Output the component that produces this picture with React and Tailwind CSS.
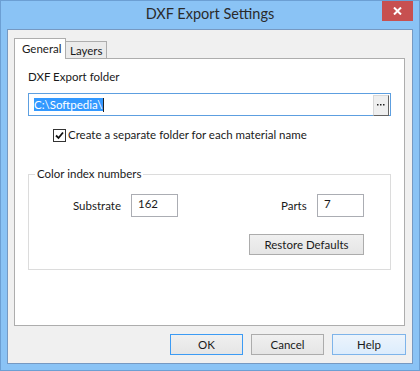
import React from 'react'

const font = { fontFamily: 'Lato, "Segoe UI", sans-serif' }

function WinButton({ children, variant = 'normal', className = '' }) {
  const styles = {
    normal: 'border-[#acacac] bg-gradient-to-b from-[#f0f0f0] to-[#e5e5e5]',
    default: 'border-[#3c9bf4] bg-gradient-to-b from-[#f0f0f0] to-[#e5e5e5]',
    hover: 'border-[#7eb4ea] bg-gradient-to-b from-[#ecf4fc] to-[#dcecfc]',
  }
  return (
    <div
      className={`flex items-center justify-center border text-[11.5px] text-[#1a1a1a] ${styles[variant]} ${className}`}
    >
      {children}
    </div>
  )
}

export default function App() {
  return (
    <div
      className="w-[420px] h-[371px] bg-[#8ac3f5] border border-[#6c9fd3] flex flex-col overflow-hidden"
      style={font}
    >
      {/* Title bar */}
      <div className="relative h-[28px] flex items-center justify-center">
        <span className="text-[14.5px] text-[#2b2b2b] leading-none mt-[-1px]">DXF Export Settings</span>
        <div className="absolute right-[6px] top-0 w-[31px] h-[20px] bg-[#c75050] flex items-center justify-center">
          <svg width="9" height="8" viewBox="0 0 9 8">
            <path d="M1 0.5 L8 7.5 M8 0.5 L1 7.5" stroke="#fff" strokeWidth="2" />
          </svg>
        </div>
      </div>

      {/* Client area */}
      <div className="mx-[6px] border border-[#7699c2] bg-[#f0f0f0] flex-1 flex flex-col">
        <div className="pl-[6px] pr-[7px] pt-[8px]">
          {/* Tabs */}
          <div className="flex items-end h-[20px]">
            <div className="relative z-10 w-[52px] h-[21px] -mb-px bg-white border border-b-0 border-[#adadad] pl-[7px] pt-[3px] text-[11.5px] leading-[14px] text-[#1a1a1a]">
              General
            </div>
            <div className="w-[41px] h-[17px] bg-[#ebebeb] border border-l-0 border-b-0 border-[#adadad] pl-[4px] pt-[2px] text-[11.5px] leading-[14px] text-[#1a1a1a]">
              Layers
            </div>
          </div>

          {/* Tab panel */}
          <div className="h-[268px] bg-white border border-[#adadad] pl-[13px] text-[11.5px] text-[#1a1a1a]">
            <div className="mt-[10px] leading-[16px]">DXF Export folder</div>

            <div className="mt-[8px] w-[363px] h-[23px] border border-[#5d9fe0] flex items-center">
              <div className="flex-1 pl-[5px] flex items-center">
                <span className="bg-[#3399ff] text-white leading-[13px] h-[13px] pr-[1px]">C:\Softpedia\</span>
                <span className="w-px h-[14px] bg-[#222]" />
              </div>
              <div className="w-[16px] h-[21px] mr-px mt-px flex items-center justify-center bg-[#efefef] border border-[#d8d8d8] border-r-[#646464] border-b-[#646464]">
                <svg width="8" height="2" viewBox="0 0 8 2">
                  <rect x="0" y="0" width="1.5" height="1.5" fill="#222" />
                  <rect x="3" y="0" width="1.5" height="1.5" fill="#222" />
                  <rect x="6" y="0" width="1.5" height="1.5" fill="#222" />
                </svg>
              </div>
            </div>

            <div className="mt-[12px] ml-[25px] flex items-center h-[14px]">
              <div className="w-[13px] h-[13px] border border-[#333] bg-white flex items-center justify-center">
                <svg width="9" height="9" viewBox="0 0 9 9">
                  <path d="M1 4.5 L3.5 7 L8 1.5" stroke="#111" strokeWidth="1.8" fill="none" />
                </svg>
              </div>
              <span className="ml-[2px] leading-[14px]">Create a separate folder for each material name</span>
            </div>

            {/* Group box */}
            <div className="relative mt-[32px] w-[363px] h-[96px] border border-[#dcdcdc]">
              <span className="absolute -top-[9px] left-[6px] bg-white px-[2px] leading-[16px]">Color index numbers</span>
              <div className="pt-[19px] pl-[44px] pr-[26px] flex items-center">
                <span className="w-[58px]">Substrate</span>
                <div className="w-[47px] h-[23px] border border-[#abadb3] bg-white pl-[6px] pt-[1px] leading-[16px]">162</div>
                <span className="ml-auto w-[36px]">Parts</span>
                <div className="w-[47px] h-[23px] border border-[#abadb3] bg-white pl-[6px] pt-[1px] leading-[16px]">7</div>
              </div>
              <div className="mt-[17px] pr-[26px] flex justify-end">
                <WinButton className="w-[115px] h-[21px]">Restore Defaults</WinButton>
              </div>
            </div>
          </div>

          {/* Dialog buttons */}
          <div className="mt-[8px] flex justify-end gap-[8px] mr-[-1px]">
            <WinButton variant="default" className="w-[73px] h-[21px]">OK</WinButton>
            <WinButton className="w-[73px] h-[21px]">Cancel</WinButton>
            <WinButton variant="hover" className="w-[74px] h-[21px]">Help</WinButton>
          </div>
        </div>
      </div>
      <div className="h-[6px]" />
    </div>
  )
}
